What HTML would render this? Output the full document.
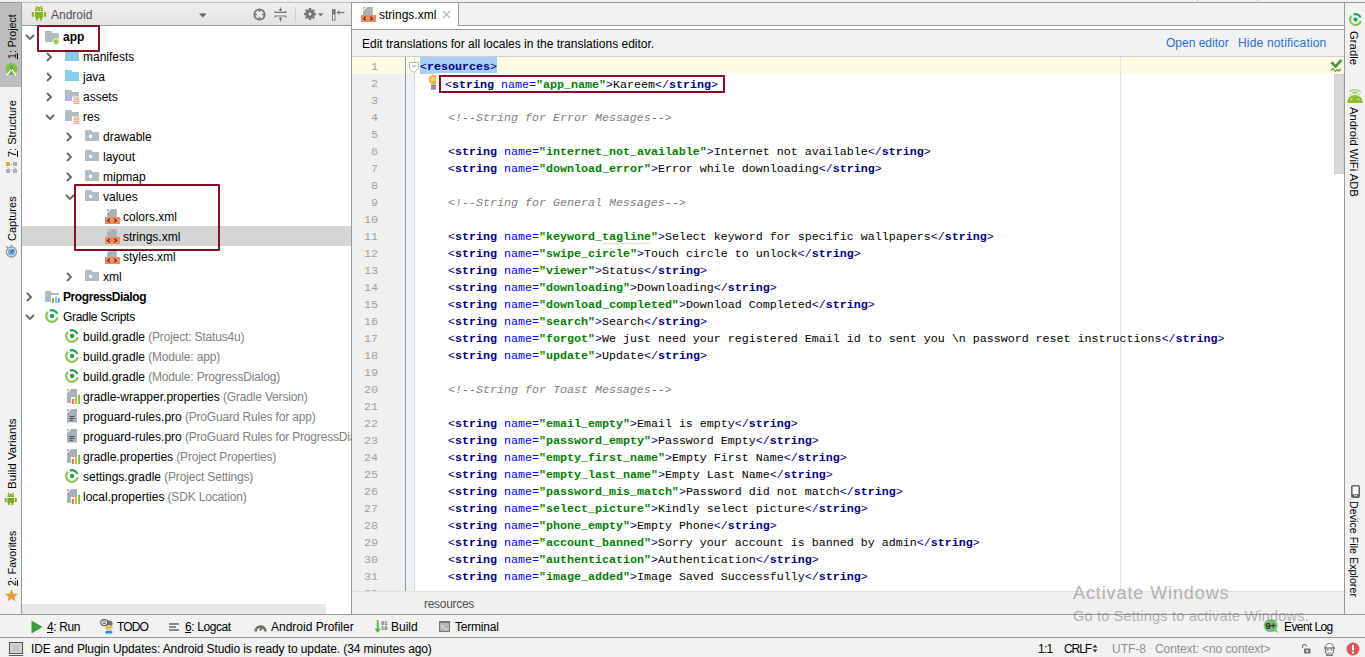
<!DOCTYPE html><html><head><meta charset="utf-8"><style>
*{margin:0;padding:0;box-sizing:border-box}
html,body{width:1365px;height:657px;overflow:hidden;background:#f2f2f2;font-family:"Liberation Sans",sans-serif;font-size:12px;color:#000}
.a{position:absolute}
.i{position:absolute;line-height:0}
.t{position:absolute;white-space:pre;line-height:14px}
.code{position:absolute;left:0;font-family:"Liberation Mono",monospace;font-size:11.67px;white-space:pre;line-height:17px;color:#000}
.tg{color:#000080}
.tb{color:#000080;font-weight:bold}
.at{color:#0000ff}
.vl{color:#008000;font-weight:bold}
.cm{color:#808080;font-style:italic}
.ln{position:absolute;font-family:"Liberation Mono",monospace;font-size:11.67px;line-height:17px;color:#a0a0a0;text-align:right;width:26px;left:0}
.vt{position:absolute;white-space:pre;line-height:14px;font-size:11px}
.gr{color:#808080;letter-spacing:-0.17px}
</style></head><body>
<div class="a" style="left:0;top:0;width:1365px;height:2px;background:#f0f0f0"></div>
<div class="a" style="left:0;top:2px;width:1365px;height:1px;background:#999"></div>
<div class="a" style="left:22px;top:2px;width:329px;height:1px;background:#bdbdbd"></div>
<div class="a" style="left:1197px;top:0;width:1px;height:1px;background:#b0b0b0"></div>
<div class="a" style="left:1257px;top:0;width:1px;height:1px;background:#b0b0b0"></div>
<div class="a" style="left:21px;top:3px;width:1px;height:611px;background:#999"></div>
<div class="a" style="left:0;top:3px;width:21px;height:84px;background:#bdbdbd"></div>
<div class="vt" style="left:5px;top:59.4px;transform-origin:0 0;transform:rotate(-90deg) scaleX(0.96)"><u>1</u>: Project</div>
<div class="vt" style="left:5px;top:156.6px;transform-origin:0 0;transform:rotate(-90deg) scaleX(1.0)"><u>7</u>: Structure</div>
<div class="vt" style="left:5px;top:241.2px;transform-origin:0 0;transform:rotate(-90deg) scaleX(1.0)">Captures</div>
<div class="vt" style="left:5px;top:489px;transform-origin:0 0;transform:rotate(-90deg) scaleX(1.05)">Build Variants</div>
<div class="vt" style="left:5px;top:585.8px;transform-origin:0 0;transform:rotate(-90deg) scaleX(0.96)"><u>2</u>: Favorites</div>
<div class="i" style="left:5px;top:63px"><svg width="13" height="13" viewBox="0 0 13 13"><circle cx="6.5" cy="6" r="6" fill="#7cc243"/><path d="M3.5 10.2a3.2 1.6 0 0 0 6 0" fill="#5ea832"/><path d="M6.5 2.2l1.3 2.3-1.3 2.6-1.3-2.6z" fill="#5b6b5b"/><circle cx="6.5" cy="4.6" r="0.6" fill="#b0d090"/><path d="M1.8 12.3L6 6.6M11.2 12.3L7 6.6" stroke="#fff" stroke-width="1.4" fill="none"/></svg></div>
<div class="i" style="left:6px;top:162px"><svg width="12" height="12" viewBox="0 0 12 12"><rect x="0" y="0" width="4" height="4" fill="#e8a33d"/><rect x="7" y="0" width="4" height="4" fill="#a6b0b8"/><rect x="0" y="7" width="4" height="4" fill="#a6b0b8"/><rect x="7" y="7" width="4" height="4" fill="#a6b0b8"/><path d="M4.5 3.5L6.5 1.5M1 5l2 1.5M8 5.5l2 1M4.5 9.5l2-2" stroke="#a6b0b8" stroke-width="0.9"/></svg></div>
<div class="i" style="left:5px;top:244px"><svg width="13" height="14" viewBox="0 0 13 14"><circle cx="6.5" cy="8" r="5" fill="#fff" stroke="#9a9a9a" stroke-width="1.4"/><circle cx="6.5" cy="8" r="3.6" fill="#5fb0e8"/><path d="M6.5 0.8v2.4M1.3 2.3l1.7 1.7" stroke="#9a9a9a" stroke-width="1.4"/><path d="M6 8.6l2.6-3" stroke="#505050" stroke-width="1.1"/></svg></div>
<div class="i" style="left:4.2px;top:492.2px"><svg width="13.5" height="14.4" viewBox="0 0 16 17"><g fill="#7ea81c"><path d="M4 5.9V5.2a4 3.2 0 0 1 8 0V5.9z"/><circle cx="5.4" cy="1.5" r="0.8"/><circle cx="10.6" cy="1.5" r="0.8"/><path d="M5.4 1.5l1 1.5M10.6 1.5l-1 1.5" stroke="#7ea81c" stroke-width="0.9"/><path d="M4 7h8v5.4a0.6 0.6 0 0 1-0.6 0.6H4.6A0.6 0.6 0 0 1 4 12.4z"/><rect x="0.8" y="7" width="2.3" height="5.1" rx="1.1"/><rect x="12.9" y="7" width="2.3" height="5.1" rx="1.1"/><rect x="5" y="12" width="2.2" height="3.7" rx="1.1"/><rect x="8.8" y="12" width="2.2" height="3.7" rx="1.1"/></g><circle cx="6.5" cy="4.5" r="0.65" fill="#fff"/><circle cx="9.5" cy="4.5" r="0.65" fill="#fff"/></svg></div>
<div class="i" style="left:5px;top:589px"><svg width="13" height="13" viewBox="0 0 13 13"><path d="M6.5 0.3l1.9 4.1 4.4 0.5-3.3 3 0.9 4.4-3.9-2.2-3.9 2.2 0.9-4.4-3.3-3 4.4-0.5z" fill="#e3a136"/></svg></div>
<div class="a" style="left:22px;top:3px;width:329px;height:22px;background:linear-gradient(#f0f0f0,#e2e2e2)"></div>
<div class="a" style="left:22px;top:25px;width:329px;height:1px;background:#9c9c9c"></div>
<div class="a" style="left:22px;top:26px;width:329px;height:588px;background:#fff"></div>
<div class="a" style="left:351px;top:3px;width:1px;height:611px;background:#999"></div>
<div class="t" style="left:51px;top:8px;color:#505050">Android</div>
<div class="i" style="left:31px;top:5px"><svg width="16" height="17" viewBox="0 0 16 17"><g fill="#8cb526"><path d="M4 5.9V5.2a4 3.2 0 0 1 8 0V5.9z"/><circle cx="5.4" cy="1.5" r="0.8"/><circle cx="10.6" cy="1.5" r="0.8"/><path d="M5.4 1.5l1 1.5M10.6 1.5l-1 1.5" stroke="#8cb526" stroke-width="0.9"/><path d="M4 7h8v5.4a0.6 0.6 0 0 1-0.6 0.6H4.6A0.6 0.6 0 0 1 4 12.4z"/><rect x="0.8" y="7" width="2.3" height="5.1" rx="1.1"/><rect x="12.9" y="7" width="2.3" height="5.1" rx="1.1"/><rect x="5" y="12" width="2.2" height="3.7" rx="1.1"/><rect x="8.8" y="12" width="2.2" height="3.7" rx="1.1"/></g><circle cx="6.5" cy="4.5" r="0.65" fill="#fff"/><circle cx="9.5" cy="4.5" r="0.65" fill="#fff"/></svg></div>
<div class="i" style="left:199px;top:13px"><svg width="8" height="5" viewBox="0 0 8 5"><path d="M0 0.5h7.5L3.75 4.5z" fill="#5e5e5e"/></svg></div>
<div class="i" style="left:253px;top:8px"><svg width="13" height="13" viewBox="0 0 13 13"><circle cx="6.5" cy="6.5" r="5.2" stroke="#777" stroke-width="1.8" fill="none"/><path d="M6.5 1.5v2.4M6.5 9.1v2.4M1.5 6.5h2.4M9.1 6.5h2.4" stroke="#777" stroke-width="1.6"/></svg></div>
<div class="i" style="left:274px;top:7px"><svg width="13" height="15" viewBox="0 0 13 15"><path d="M1.2 3.8v1.6h10.6v-1.6M1.2 10.6v-1.6h10.6v1.6" stroke="#777" stroke-width="1.2" fill="none"/><path d="M6.5 0.5v3.5M6.5 10.5v4" stroke="#777" stroke-width="1.1"/><path d="M4.3 2.3L6.5 4.5 8.7 2.3zM4.3 12.3L6.5 10.1 8.7 12.3z" fill="#777"/></svg></div>
<div class="a" style="left:295px;top:7px;width:1px;height:15px;background:#cfcfcf"></div>
<div class="i" style="left:303px;top:7px"><svg width="14" height="14" viewBox="0 0 14 14"><g fill="#777"><circle cx="7" cy="7" r="4.6"/><rect x="5.8" y="1" width="2.4" height="12"/><rect x="1" y="5.8" width="12" height="2.4"/><rect x="5.8" y="1" width="2.4" height="12" transform="rotate(45 7 7)"/><rect x="5.8" y="1" width="2.4" height="12" transform="rotate(-45 7 7)"/></g><circle cx="7" cy="7" r="1.5" fill="#eee"/></svg></div>
<div class="i" style="left:318px;top:13px"><svg width="6" height="4" viewBox="0 0 6 4"><path d="M0 0.3h5.2L2.6 3.4z" fill="#777"/></svg></div>
<div class="i" style="left:331px;top:8px"><svg width="15" height="13" viewBox="0 0 15 13"><rect x="1.5" y="1.5" width="2.4" height="10.5" stroke="#777" stroke-width="1" fill="#fff"/><rect x="1" y="1" width="3.4" height="5.5" fill="#777"/><path d="M7 4.5h6.5" stroke="#777" stroke-width="1.2"/><path d="M5.6 4.5L8.3 2v5z" fill="#777"/></svg></div>
<div class="a" style="left:22px;top:604px;width:304px;height:10px;background:#e6e6e6"></div>
<div class="a" style="left:22px;top:226px;width:329px;height:20px;background:#d5d5d5"></div>
<div class="i" style="left:25px;top:34px"><svg width="10" height="7" viewBox="0 0 10 7"><path d="M1 1L5 5L9 1" stroke="#666" stroke-width="1.8" fill="none"/></svg></div>
<div class="i" style="left:44px;top:30px"><svg width="16" height="16" viewBox="0 0 16 16"><path d="M1 1h6l1.5 2H15v9H1z" fill="#b4bcc3"/><circle cx="12.2" cy="11.7" r="3" fill="#9bc53d" stroke="#fff" stroke-width="0.9"/></svg></div>
<div class="t" style="left:63px;top:30px;font-weight:bold;">app</div>
<div class="i" style="left:46px;top:52px"><svg width="7" height="10" viewBox="0 0 7 10"><path d="M1 1L5 5L1 9" stroke="#666" stroke-width="1.8" fill="none"/></svg></div>
<div class="i" style="left:64px;top:49px"><svg width="16" height="16" viewBox="0 0 16 16"><path d="M1 1h6l1.5 2H15v9H1z" fill="#87cfe8"/></svg></div>
<div class="t" style="left:83px;top:50px;">manifests</div>
<div class="i" style="left:46px;top:72px"><svg width="7" height="10" viewBox="0 0 7 10"><path d="M1 1L5 5L1 9" stroke="#666" stroke-width="1.8" fill="none"/></svg></div>
<div class="i" style="left:64px;top:69px"><svg width="16" height="16" viewBox="0 0 16 16"><path d="M1 1h6l1.5 2H15v9H1z" fill="#87cfe8"/></svg></div>
<div class="t" style="left:83px;top:70px;">java</div>
<div class="i" style="left:46px;top:92px"><svg width="7" height="10" viewBox="0 0 7 10"><path d="M1 1L5 5L1 9" stroke="#666" stroke-width="1.8" fill="none"/></svg></div>
<div class="i" style="left:64px;top:89px"><svg width="16" height="16" viewBox="0 0 16 16"><path d="M1 1h6l1.5 2H15v9H1z" fill="#b4bcc3"/><rect x="8" y="7.5" width="8" height="8.5" fill="#fff"/><path d="M9.5 9h6M9.5 10.8h6M9.5 12.6h6M9.5 14.4h6" stroke="#e3a13a" stroke-width="1"/></svg></div>
<div class="t" style="left:83px;top:90px;">assets</div>
<div class="i" style="left:45px;top:114px"><svg width="10" height="7" viewBox="0 0 10 7"><path d="M1 1L5 5L9 1" stroke="#666" stroke-width="1.8" fill="none"/></svg></div>
<div class="i" style="left:64px;top:109px"><svg width="16" height="16" viewBox="0 0 16 16"><path d="M1 1h6l1.5 2H15v9H1z" fill="#b4bcc3"/><rect x="8" y="7.5" width="8" height="8.5" fill="#fff"/><path d="M9.5 9h6M9.5 10.8h6M9.5 12.6h6M9.5 14.4h6" stroke="#e3a13a" stroke-width="1"/></svg></div>
<div class="t" style="left:83px;top:110px;">res</div>
<div class="i" style="left:66px;top:132px"><svg width="7" height="10" viewBox="0 0 7 10"><path d="M1 1L5 5L1 9" stroke="#666" stroke-width="1.8" fill="none"/></svg></div>
<div class="i" style="left:84px;top:129px"><svg width="16" height="16" viewBox="0 0 16 16"><path d="M1 1h6l1.5 2H15v9H1z" fill="#b4bcc3"/><circle cx="6.5" cy="7.5" r="1.7" fill="#fff"/></svg></div>
<div class="t" style="left:103px;top:130px;">drawable</div>
<div class="i" style="left:66px;top:152px"><svg width="7" height="10" viewBox="0 0 7 10"><path d="M1 1L5 5L1 9" stroke="#666" stroke-width="1.8" fill="none"/></svg></div>
<div class="i" style="left:84px;top:149px"><svg width="16" height="16" viewBox="0 0 16 16"><path d="M1 1h6l1.5 2H15v9H1z" fill="#b4bcc3"/><circle cx="6.5" cy="7.5" r="1.7" fill="#fff"/></svg></div>
<div class="t" style="left:103px;top:150px;">layout</div>
<div class="i" style="left:66px;top:172px"><svg width="7" height="10" viewBox="0 0 7 10"><path d="M1 1L5 5L1 9" stroke="#666" stroke-width="1.8" fill="none"/></svg></div>
<div class="i" style="left:84px;top:169px"><svg width="16" height="16" viewBox="0 0 16 16"><path d="M1 1h6l1.5 2H15v9H1z" fill="#b4bcc3"/><circle cx="6.5" cy="7.5" r="1.7" fill="#fff"/></svg></div>
<div class="t" style="left:103px;top:170px;">mipmap</div>
<div class="i" style="left:65px;top:194px"><svg width="10" height="7" viewBox="0 0 10 7"><path d="M1 1L5 5L9 1" stroke="#666" stroke-width="1.8" fill="none"/></svg></div>
<div class="i" style="left:84px;top:189px"><svg width="16" height="16" viewBox="0 0 16 16"><path d="M1 1h6l1.5 2H15v9H1z" fill="#b4bcc3"/><circle cx="6.5" cy="7.5" r="1.7" fill="#fff"/></svg></div>
<div class="t" style="left:103px;top:190px;">values</div>
<div class="i" style="left:104px;top:209px"><svg width="16" height="16" viewBox="0 0 16 16"><path d="M7.2 0H12.8V8H3V4.2z" fill="#a9b2ba"/><path d="M3 0H5.8L3 2.8z" fill="#a9b2ba"/><rect x="1" y="8" width="15" height="7" fill="#ef8c5c"/><path d="M5.8 9.6l-2.3 1.9 2.3 1.9M10.2 9.6l2.3 1.9-2.3 1.9" stroke="#4a2a1a" stroke-width="1.1" fill="none"/></svg></div>
<div class="t" style="left:123px;top:210px;">colors.xml</div>
<div class="i" style="left:104px;top:229px"><svg width="16" height="16" viewBox="0 0 16 16"><path d="M7.2 0H12.8V8H3V4.2z" fill="#a9b2ba"/><path d="M3 0H5.8L3 2.8z" fill="#a9b2ba"/><rect x="1" y="8" width="15" height="7" fill="#ef8c5c"/><path d="M5.8 9.6l-2.3 1.9 2.3 1.9M10.2 9.6l2.3 1.9-2.3 1.9" stroke="#4a2a1a" stroke-width="1.1" fill="none"/></svg></div>
<div class="t" style="left:123px;top:230px;">strings.xml</div>
<div class="i" style="left:104px;top:249px"><svg width="16" height="16" viewBox="0 0 16 16"><path d="M7.2 0H12.8V8H3V4.2z" fill="#a9b2ba"/><path d="M3 0H5.8L3 2.8z" fill="#a9b2ba"/><rect x="1" y="8" width="15" height="7" fill="#ef8c5c"/><path d="M5.8 9.6l-2.3 1.9 2.3 1.9M10.2 9.6l2.3 1.9-2.3 1.9" stroke="#4a2a1a" stroke-width="1.1" fill="none"/></svg></div>
<div class="t" style="left:123px;top:250px;">styles.xml</div>
<div class="i" style="left:66px;top:272px"><svg width="7" height="10" viewBox="0 0 7 10"><path d="M1 1L5 5L1 9" stroke="#666" stroke-width="1.8" fill="none"/></svg></div>
<div class="i" style="left:84px;top:269px"><svg width="16" height="16" viewBox="0 0 16 16"><path d="M1 1h6l1.5 2H15v9H1z" fill="#b4bcc3"/><circle cx="6.5" cy="7.5" r="1.7" fill="#fff"/></svg></div>
<div class="t" style="left:103px;top:270px;">xml</div>
<div class="i" style="left:26px;top:292px"><svg width="7" height="10" viewBox="0 0 7 10"><path d="M1 1L5 5L1 9" stroke="#666" stroke-width="1.8" fill="none"/></svg></div>
<div class="i" style="left:44px;top:289px"><svg width="16" height="16" viewBox="0 0 16 16"><path d="M1 2h5.5l1.5 2H15v9H1z" fill="#b4bcc3"/><rect x="7" y="6" width="9" height="10" fill="#fff"/><rect x="8" y="9" width="1.9" height="5" fill="#6cbf4c"/><rect x="11" y="7.5" width="1.9" height="6.5" fill="#a9b2ba"/><rect x="13.8" y="9" width="1.9" height="5" fill="#40a9e0"/></svg></div>
<div class="t" style="left:63px;top:290px;font-weight:bold;letter-spacing:-0.4px;">ProgressDialog</div>
<div class="i" style="left:25px;top:314px"><svg width="10" height="7" viewBox="0 0 10 7"><path d="M1 1L5 5L9 1" stroke="#666" stroke-width="1.8" fill="none"/></svg></div>
<div class="i" style="left:44px;top:309px"><svg width="16" height="16" viewBox="0 0 16 16"><path d="M13.67 8.21A5.8 5.8 0 1 1 3.9 2.9" stroke="#8dc152" stroke-width="2.2" fill="none"/><path d="M5.83 1.62A5.8 5.8 0 0 1 13.38 4.83" stroke="#22a35a" stroke-width="2.2" fill="none"/><circle cx="8" cy="7" r="2.3" fill="#22a35a"/></svg></div>
<div class="t" style="left:63px;top:310px;letter-spacing:-0.3px;">Gradle Scripts</div>
<div class="i" style="left:64px;top:329px"><svg width="16" height="16" viewBox="0 0 16 16"><path d="M13.67 8.21A5.8 5.8 0 1 1 3.9 2.9" stroke="#8dc152" stroke-width="2.2" fill="none"/><path d="M5.83 1.62A5.8 5.8 0 0 1 13.38 4.83" stroke="#22a35a" stroke-width="2.2" fill="none"/><circle cx="8" cy="7" r="2.3" fill="#22a35a"/></svg></div>
<div class="t" style="left:83px;top:330px;">build.gradle<span class="gr"> (Project: Status4u)</span></div>
<div class="i" style="left:64px;top:349px"><svg width="16" height="16" viewBox="0 0 16 16"><path d="M13.67 8.21A5.8 5.8 0 1 1 3.9 2.9" stroke="#8dc152" stroke-width="2.2" fill="none"/><path d="M5.83 1.62A5.8 5.8 0 0 1 13.38 4.83" stroke="#22a35a" stroke-width="2.2" fill="none"/><circle cx="8" cy="7" r="2.3" fill="#22a35a"/></svg></div>
<div class="t" style="left:83px;top:350px;">build.gradle<span class="gr"> (Module: app)</span></div>
<div class="i" style="left:64px;top:369px"><svg width="16" height="16" viewBox="0 0 16 16"><path d="M13.67 8.21A5.8 5.8 0 1 1 3.9 2.9" stroke="#8dc152" stroke-width="2.2" fill="none"/><path d="M5.83 1.62A5.8 5.8 0 0 1 13.38 4.83" stroke="#22a35a" stroke-width="2.2" fill="none"/><circle cx="8" cy="7" r="2.3" fill="#22a35a"/></svg></div>
<div class="t" style="left:83px;top:370px;">build.gradle<span class="gr"> (Module: ProgressDialog)</span></div>
<div class="i" style="left:64px;top:389px"><svg width="16" height="16" viewBox="0 0 16 16"><path d="M7.2 0H13V14H3V4.2z" fill="#a9b2ba"/><path d="M3 0H5.8L3 2.8z" fill="#a9b2ba"/><rect x="7" y="8" width="9.5" height="8" fill="#fff"/><rect x="7.9" y="10" width="1.9" height="5" fill="#f26a2a"/><rect x="11" y="7.8" width="1.9" height="7.2" fill="#f5a93a"/><rect x="14.2" y="5.8" width="1.9" height="9.2" fill="#6cbf4c"/></svg></div>
<div class="t" style="left:83px;top:390px;">gradle-wrapper.properties<span class="gr"> (Gradle Version)</span></div>
<div class="i" style="left:64px;top:409px"><svg width="16" height="16" viewBox="0 0 16 16"><path d="M7.2 0H13V13.5H3V4.2z" fill="#a9b2ba"/><path d="M3 0H5.8L3 2.8z" fill="#a9b2ba"/><path d="M5.5 7.5h5M5.5 9.4h5M5.5 11.3h3.5" stroke="#4a4a4a" stroke-width="1"/></svg></div>
<div class="t" style="left:83px;top:410px;">proguard-rules.pro<span class="gr"> (ProGuard Rules for app)</span></div>
<div class="i" style="left:64px;top:429px"><svg width="16" height="16" viewBox="0 0 16 16"><path d="M7.2 0H13V13.5H3V4.2z" fill="#a9b2ba"/><path d="M3 0H5.8L3 2.8z" fill="#a9b2ba"/><path d="M5.5 7.5h5M5.5 9.4h5M5.5 11.3h3.5" stroke="#4a4a4a" stroke-width="1"/></svg></div>
<div class="t" style="left:83px;top:430px;">proguard-rules.pro<span class="gr"> (ProGuard Rules for ProgressDialog)</span></div>
<div class="i" style="left:64px;top:449px"><svg width="16" height="16" viewBox="0 0 16 16"><path d="M7.2 0H13V14H3V4.2z" fill="#a9b2ba"/><path d="M3 0H5.8L3 2.8z" fill="#a9b2ba"/><rect x="7" y="8" width="9.5" height="8" fill="#fff"/><rect x="7.9" y="10" width="1.9" height="5" fill="#f26a2a"/><rect x="11" y="7.8" width="1.9" height="7.2" fill="#f5a93a"/><rect x="14.2" y="5.8" width="1.9" height="9.2" fill="#6cbf4c"/></svg></div>
<div class="t" style="left:83px;top:450px;">gradle.properties<span class="gr"> (Project Properties)</span></div>
<div class="i" style="left:64px;top:469px"><svg width="16" height="16" viewBox="0 0 16 16"><path d="M13.67 8.21A5.8 5.8 0 1 1 3.9 2.9" stroke="#8dc152" stroke-width="2.2" fill="none"/><path d="M5.83 1.62A5.8 5.8 0 0 1 13.38 4.83" stroke="#22a35a" stroke-width="2.2" fill="none"/><circle cx="8" cy="7" r="2.3" fill="#22a35a"/></svg></div>
<div class="t" style="left:83px;top:470px;">settings.gradle<span class="gr"> (Project Settings)</span></div>
<div class="i" style="left:64px;top:489px"><svg width="16" height="16" viewBox="0 0 16 16"><path d="M7.2 0H13V14H3V4.2z" fill="#a9b2ba"/><path d="M3 0H5.8L3 2.8z" fill="#a9b2ba"/><rect x="7" y="8" width="9.5" height="8" fill="#fff"/><rect x="7.9" y="10" width="1.9" height="5" fill="#f26a2a"/><rect x="11" y="7.8" width="1.9" height="7.2" fill="#f5a93a"/><rect x="14.2" y="5.8" width="1.9" height="9.2" fill="#6cbf4c"/></svg></div>
<div class="t" style="left:83px;top:490px;">local.properties<span class="gr"> (SDK Location)</span></div>
<div class="a" style="left:37px;top:25px;width:63px;height:27px;border:2px solid #8b0f22;border-radius:1px"></div>
<div class="a" style="left:74px;top:184px;width:146px;height:67px;border:2px solid #8b0f22;border-radius:1px"></div>
<div class="a" style="left:352px;top:3px;width:992px;height:22px;background:#f2f2f2"></div>
<div class="a" style="left:352px;top:25px;width:992px;height:1px;background:#999"></div>
<div class="a" style="left:352px;top:26px;width:992px;height:3px;background:#fff"></div>
<div class="a" style="left:352px;top:29px;width:992px;height:1px;background:#999"></div>
<div class="a" style="left:352px;top:3px;width:106px;height:26px;background:#fff"></div>
<div class="a" style="left:458px;top:3px;width:1px;height:23px;background:#999"></div>
<div class="i" style="left:360px;top:7px"><svg width="16" height="16" viewBox="0 0 16 16"><path d="M7.2 0H12.8V8H3V4.2z" fill="#a9b2ba"/><path d="M3 0H5.8L3 2.8z" fill="#a9b2ba"/><rect x="1" y="8" width="15" height="7" fill="#ef8c5c"/><path d="M5.8 9.6l-2.3 1.9 2.3 1.9M10.2 9.6l2.3 1.9-2.3 1.9" stroke="#4a2a1a" stroke-width="1.1" fill="none"/></svg></div>
<div class="t" style="left:379px;top:8px">strings.xml</div>
<div class="i" style="left:442px;top:10px"><svg width="9" height="9" viewBox="0 0 9 9"><path d="M1 1L8 8M8 1L1 8" stroke="#b0b5ba" stroke-width="1.1"/></svg></div>
<div class="a" style="left:352px;top:30px;width:992px;height:26px;background:#f2f2f2"></div>
<div class="a" style="left:352px;top:56px;width:992px;height:1px;background:#cfcfcf"></div>
<div class="t" style="left:362px;top:37px">Edit translations for all locales in the translations editor.</div>
<div class="t" style="left:1166px;top:36px;color:#2a6fd0">Open editor</div>
<div class="t" style="left:1238px;top:36px;color:#2a6fd0;letter-spacing:0.18px">Hide notification</div>
<div class="a" style="left:352px;top:57px;width:992px;height:534px;background:#fff"></div>
<div class="a" style="left:352px;top:57px;width:63px;height:534px;background:#f0f0f0"></div>
<div class="a" style="left:352px;top:57px;width:992px;height:17px;background:#fffae2"></div>
<div class="a" style="left:420px;top:57px;width:77px;height:17px;background:#a6d0fa"></div>
<div class="a" style="left:405px;top:57px;width:1px;height:534px;background:#7f9cc0"></div>
<div class="a" style="left:414px;top:57px;width:1px;height:534px;background:#d8d8d8"></div>
<div class="a" style="left:1120px;top:57px;width:1px;height:534px;background:#e4e4e4"></div>
<div class="i" style="left:409px;top:62px"><svg width="11" height="11" viewBox="0 0 11 11"><path d="M0.5 0.5h9v6l-4.5 4-4.5-4z" fill="#fff" stroke="#b8b8b8" stroke-width="1"/><path d="M2.8 4h4.4" stroke="#999" stroke-width="1"/></svg></div>
<div class="a" style="left:1334px;top:74px;width:10px;height:100px;background:#dadada;border:1px solid #d0d0d0"></div>
<div class="i" style="left:1330px;top:58px"><svg width="14" height="14" viewBox="0 0 14 14"><path d="M1.4 4.3L5.6 8.5L11.4 2" stroke="#489c3d" stroke-width="2.7" fill="none"/><path d="M1.3 12.6C2.5 10 3.3 10 4.5 12.4S6.6 10 7.8 12.4S9.9 10 11.3 11.4" stroke="#489c3d" stroke-width="1.2" fill="none"/></svg></div>
<div class="a" style="left:352px;top:57px;width:982px;height:534px;overflow:hidden">
<div class="ln" style="top:2px">1</div>
<div class="code" style="left:68px;top:2px"><span class="tg">&lt;</span><span class="tb">resources</span><span class="tg">&gt;</span></div>
<div class="ln" style="top:19px">2</div>
<div class="code" style="left:93px;top:19px"><span class="tg">&lt;</span><span class="tb">string</span> <span class="at">name=</span><span class="vl">"app_name"</span><span class="tg">&gt;</span>Kareem<span class="tg">&lt;/</span><span class="tb">string</span><span class="tg">&gt;</span></div>
<div class="ln" style="top:36px">3</div>
<div class="ln" style="top:53px">4</div>
<div class="code cm" style="left:96px;top:53px">&lt;!--String for Error Messages--&gt;</div>
<div class="ln" style="top:70px">5</div>
<div class="ln" style="top:87px">6</div>
<div class="code" style="left:96px;top:87px"><span class="tg">&lt;</span><span class="tb">string</span> <span class="at">name=</span><span class="vl">"internet_not_available"</span><span class="tg">&gt;</span>Internet not available<span class="tg">&lt;/</span><span class="tb">string</span><span class="tg">&gt;</span></div>
<div class="ln" style="top:104px">7</div>
<div class="code" style="left:96px;top:104px"><span class="tg">&lt;</span><span class="tb">string</span> <span class="at">name=</span><span class="vl">"download_error"</span><span class="tg">&gt;</span>Error while downloading<span class="tg">&lt;/</span><span class="tb">string</span><span class="tg">&gt;</span></div>
<div class="ln" style="top:121px">8</div>
<div class="ln" style="top:138px">9</div>
<div class="code cm" style="left:96px;top:138px">&lt;!--String for General Messages--&gt;</div>
<div class="ln" style="top:155px">10</div>
<div class="ln" style="top:172px">11</div>
<div class="code" style="left:96px;top:172px"><span class="tg">&lt;</span><span class="tb">string</span> <span class="at">name=</span><span class="vl">"keyword_tagline"</span><span class="tg">&gt;</span>Select keyword for specific wallpapers<span class="tg">&lt;/</span><span class="tb">string</span><span class="tg">&gt;</span></div>
<div class="ln" style="top:189px">12</div>
<div class="code" style="left:96px;top:189px"><span class="tg">&lt;</span><span class="tb">string</span> <span class="at">name=</span><span class="vl">"swipe_circle"</span><span class="tg">&gt;</span>Touch circle to unlock<span class="tg">&lt;/</span><span class="tb">string</span><span class="tg">&gt;</span></div>
<div class="ln" style="top:206px">13</div>
<div class="code" style="left:96px;top:206px"><span class="tg">&lt;</span><span class="tb">string</span> <span class="at">name=</span><span class="vl">"viewer"</span><span class="tg">&gt;</span>Status<span class="tg">&lt;/</span><span class="tb">string</span><span class="tg">&gt;</span></div>
<div class="ln" style="top:223px">14</div>
<div class="code" style="left:96px;top:223px"><span class="tg">&lt;</span><span class="tb">string</span> <span class="at">name=</span><span class="vl">"downloading"</span><span class="tg">&gt;</span>Downloading<span class="tg">&lt;/</span><span class="tb">string</span><span class="tg">&gt;</span></div>
<div class="ln" style="top:240px">15</div>
<div class="code" style="left:96px;top:240px"><span class="tg">&lt;</span><span class="tb">string</span> <span class="at">name=</span><span class="vl">"download_completed"</span><span class="tg">&gt;</span>Download Completed<span class="tg">&lt;/</span><span class="tb">string</span><span class="tg">&gt;</span></div>
<div class="ln" style="top:257px">16</div>
<div class="code" style="left:96px;top:257px"><span class="tg">&lt;</span><span class="tb">string</span> <span class="at">name=</span><span class="vl">"search"</span><span class="tg">&gt;</span>Search<span class="tg">&lt;/</span><span class="tb">string</span><span class="tg">&gt;</span></div>
<div class="ln" style="top:274px">17</div>
<div class="code" style="left:96px;top:274px"><span class="tg">&lt;</span><span class="tb">string</span> <span class="at">name=</span><span class="vl">"forgot"</span><span class="tg">&gt;</span>We just need your registered Email id to sent you \n password reset instructions<span class="tg">&lt;/</span><span class="tb">string</span><span class="tg">&gt;</span></div>
<div class="ln" style="top:291px">18</div>
<div class="code" style="left:96px;top:291px"><span class="tg">&lt;</span><span class="tb">string</span> <span class="at">name=</span><span class="vl">"update"</span><span class="tg">&gt;</span>Update<span class="tg">&lt;/</span><span class="tb">string</span><span class="tg">&gt;</span></div>
<div class="ln" style="top:308px">19</div>
<div class="ln" style="top:325px">20</div>
<div class="code cm" style="left:96px;top:325px">&lt;!--String for Toast Messages--&gt;</div>
<div class="ln" style="top:342px">21</div>
<div class="ln" style="top:359px">22</div>
<div class="code" style="left:96px;top:359px"><span class="tg">&lt;</span><span class="tb">string</span> <span class="at">name=</span><span class="vl">"email_empty"</span><span class="tg">&gt;</span>Email is empty<span class="tg">&lt;/</span><span class="tb">string</span><span class="tg">&gt;</span></div>
<div class="ln" style="top:376px">23</div>
<div class="code" style="left:96px;top:376px"><span class="tg">&lt;</span><span class="tb">string</span> <span class="at">name=</span><span class="vl">"password_empty"</span><span class="tg">&gt;</span>Password Empty<span class="tg">&lt;/</span><span class="tb">string</span><span class="tg">&gt;</span></div>
<div class="ln" style="top:393px">24</div>
<div class="code" style="left:96px;top:393px"><span class="tg">&lt;</span><span class="tb">string</span> <span class="at">name=</span><span class="vl">"empty_first_name"</span><span class="tg">&gt;</span>Empty First Name<span class="tg">&lt;/</span><span class="tb">string</span><span class="tg">&gt;</span></div>
<div class="ln" style="top:410px">25</div>
<div class="code" style="left:96px;top:410px"><span class="tg">&lt;</span><span class="tb">string</span> <span class="at">name=</span><span class="vl">"empty_last_name"</span><span class="tg">&gt;</span>Empty Last Name<span class="tg">&lt;/</span><span class="tb">string</span><span class="tg">&gt;</span></div>
<div class="ln" style="top:427px">26</div>
<div class="code" style="left:96px;top:427px"><span class="tg">&lt;</span><span class="tb">string</span> <span class="at">name=</span><span class="vl">"password_mis_match"</span><span class="tg">&gt;</span>Password did not match<span class="tg">&lt;/</span><span class="tb">string</span><span class="tg">&gt;</span></div>
<div class="ln" style="top:444px">27</div>
<div class="code" style="left:96px;top:444px"><span class="tg">&lt;</span><span class="tb">string</span> <span class="at">name=</span><span class="vl">"select_picture"</span><span class="tg">&gt;</span>Kindly select picture<span class="tg">&lt;/</span><span class="tb">string</span><span class="tg">&gt;</span></div>
<div class="ln" style="top:461px">28</div>
<div class="code" style="left:96px;top:461px"><span class="tg">&lt;</span><span class="tb">string</span> <span class="at">name=</span><span class="vl">"phone_empty"</span><span class="tg">&gt;</span>Empty Phone<span class="tg">&lt;/</span><span class="tb">string</span><span class="tg">&gt;</span></div>
<div class="ln" style="top:478px">29</div>
<div class="code" style="left:96px;top:478px"><span class="tg">&lt;</span><span class="tb">string</span> <span class="at">name=</span><span class="vl">"account_banned"</span><span class="tg">&gt;</span>Sorry your account is banned by admin<span class="tg">&lt;/</span><span class="tb">string</span><span class="tg">&gt;</span></div>
<div class="ln" style="top:495px">30</div>
<div class="code" style="left:96px;top:495px"><span class="tg">&lt;</span><span class="tb">string</span> <span class="at">name=</span><span class="vl">"authentication"</span><span class="tg">&gt;</span>Authentication<span class="tg">&lt;/</span><span class="tb">string</span><span class="tg">&gt;</span></div>
<div class="ln" style="top:512px">31</div>
<div class="code" style="left:96px;top:512px"><span class="tg">&lt;</span><span class="tb">string</span> <span class="at">name=</span><span class="vl">"image_added"</span><span class="tg">&gt;</span>Image Saved Successfully<span class="tg">&lt;/</span><span class="tb">string</span><span class="tg">&gt;</span></div>
<div class="ln" style="top:529px">32</div>
</div>
<div class="i" style="left:603px;top:241px"><svg width="48" height="3" viewBox="0 0 48 3"><path d="M0 2.5l1.5-2 1.5 2 1.5-2 1.5 2 1.5-2 1.5 2 1.5-2 1.5 2 1.5-2 1.5 2 1.5-2 1.5 2 1.5-2 1.5 2 1.5-2 1.5 2 1.5-2 1.5 2 1.5-2 1.5 2 1.5-2 1.5 2 1.5-2 1.5 2 1.5-2 1.5 2 1.5-2 1.5 2 1.5-2 1.5 2 1.5-2 1.5 2 1.5-2 1.5 2 1.5-2 1.5 2" stroke="#c8d8b0" stroke-width="0.8" fill="none"/></svg></div>
<div class="a" style="left:436px;top:73px;width:300px;height:22px;background:#fff"></div>
<div class="i" style="left:428px;top:74px;width:8px;overflow:hidden"><svg width="11" height="16" viewBox="0 0 11 16"><circle cx="5.5" cy="5.6" r="4.8" fill="#f4b03e"/><circle cx="5" cy="5" r="2.5" fill="#f8c766"/><path d="M3.5 5l1.5 1.2 1.5-1.2" stroke="#fff3c0" stroke-width="0.8" fill="none"/><rect x="3" y="10.5" width="5" height="5.2" fill="#cfcfcf"/><path d="M3 11.3h5M3 13.1h5M3 14.9h5" stroke="#6a6a6a" stroke-width="1"/></svg></div>
<div class="a" style="left:439px;top:75px;width:286px;height:18px;border:2px solid #8b0f22"></div>
<div class="code" style="left:445px;top:77px"><span class="tg">&lt;</span><span class="tb">string</span> <span class="at">name=</span><span class="vl">"app_name"</span><span class="tg">&gt;</span>Kareem<span class="tg">&lt;/</span><span class="tb">string</span><span class="tg">&gt;</span></div>
<div class="a" style="left:352px;top:592px;width:992px;height:22px;background:#f0f0f0"></div>
<div class="a" style="left:352px;top:591px;width:992px;height:1px;background:#e0e0e0"></div>
<div class="t" style="left:424px;top:597px;color:#505050;letter-spacing:-0.3px">resources</div>
<div class="a" style="left:1344px;top:3px;width:1px;height:611px;background:#999"></div>
<div class="a" style="left:1345px;top:3px;width:20px;height:611px;background:#f2f2f2"></div>
<div class="vt" style="left:1361px;top:30.9px;transform-origin:0 0;transform:rotate(90deg) scaleX(1.03)">Gradle</div>
<div class="vt" style="left:1361px;top:106.9px;transform-origin:0 0;transform:rotate(90deg) scaleX(1.02)">Android WiFi ADB</div>
<div class="vt" style="left:1361px;top:501.3px;transform-origin:0 0;transform:rotate(90deg) scaleX(0.975)">Device File Explorer</div>
<div class="i" style="left:1348px;top:13px"><svg width="15" height="15" viewBox="0 0 16 16"><path d="M13.67 8.21A5.8 5.8 0 1 1 3.9 2.9" stroke="#8dc152" stroke-width="2.3" fill="none"/><path d="M5.83 1.62A5.8 5.8 0 0 1 13.38 4.83" stroke="#22a35a" stroke-width="2.3" fill="none"/><circle cx="8" cy="7" r="2.3" fill="#22a35a"/></svg></div>
<div class="i" style="left:1347px;top:87px"><svg width="16" height="16" viewBox="0 0 16 16"><path d="M2.3 4.8A7.5 6 0 0 1 13.7 4.8" stroke="#9cc45a" stroke-width="1.1" fill="none"/><path d="M5 6.3A4 3.4 0 0 1 11 6.3" stroke="#9cc45a" stroke-width="1.1" fill="none"/><circle cx="8" cy="6.2" r="1" fill="#9cc45a"/><circle cx="3.6" cy="7.6" r="0.7" fill="#8fbd2e"/><circle cx="12.4" cy="7.6" r="0.7" fill="#8fbd2e"/><path d="M0.2 16A7.8 8 0 0 1 15.8 16z" fill="#8fbd2e"/><circle cx="4.6" cy="12.2" r="0.8" fill="#fff"/><circle cx="11.4" cy="12.2" r="0.8" fill="#fff"/></svg></div>
<div class="i" style="left:1351px;top:485px"><svg width="9" height="13" viewBox="0 0 9 13"><rect x="0.8" y="0.8" width="7.4" height="11.4" rx="1.2" stroke="#666" stroke-width="1.6" fill="#fff"/><rect x="0.8" y="9.2" width="7.4" height="3" fill="#666"/><path d="M3 10.7h3" stroke="#fff" stroke-width="0.9"/></svg></div>
<div class="a" style="left:0;top:614px;width:1365px;height:1px;background:#999"></div>
<div class="a" style="left:326px;top:604px;width:25px;height:10px;background:#fff"></div>
<div class="a" style="left:0;top:637px;width:1365px;height:1px;background:#9a9a9a"></div>
<div class="t" style="left:47px;top:620px;letter-spacing:-0.4px"><u>4</u>: Run</div>
<div class="t" style="left:117px;top:620px;letter-spacing:-0.9px">TODO</div>
<div class="t" style="left:185px;top:620px;letter-spacing:-0.4px"><u>6</u>: Logcat</div>
<div class="t" style="left:271px;top:620px">Android Profiler</div>
<div class="t" style="left:391px;top:620px">Build</div>
<div class="t" style="left:455px;top:620px;letter-spacing:-0.2px">Terminal</div>
<div class="t" style="left:1284px;top:620px;letter-spacing:-0.6px">Event Log</div>
<div class="i" style="left:31px;top:620px"><svg width="12" height="14" viewBox="0 0 12 14"><path d="M0.5 0.5L11.5 7 0.5 13.5z" fill="#3a9d3a"/></svg></div>
<div class="i" style="left:100px;top:619px"><svg width="15" height="15" viewBox="0 0 15 15"><path d="M5.3 7.2a3.7 3.3 0 0 1 2.4-5.6h1.6a3.7 3.3 0 0 1 2.4 5.6z" fill="#757575"/><rect x="5.8" y="6" width="6" height="5.6" rx="2.2" fill="#f5c07a"/><rect x="4.9" y="7.6" width="1.2" height="2" fill="#f5c07a"/><rect x="11.5" y="7.6" width="1.2" height="2" fill="#f5c07a"/><circle cx="7.6" cy="8.3" r="0.5" fill="#555"/><circle cx="10" cy="8.3" r="0.5" fill="#555"/><path d="M5.3 14.5v-1.4c0-0.8 0.8-1.4 1.6-1.4h3.8c0.8 0 1.6 0.6 1.6 1.4v1.4z" fill="#2e8bd0"/><ellipse cx="4.2" cy="3.6" rx="3.5" ry="3" fill="#fff" stroke="#555" stroke-width="1.1"/><path d="M2.6 2.9h3.2M2.6 4.4h3.2" stroke="#555" stroke-width="0.9"/></svg></div>
<div class="i" style="left:169px;top:623px"><svg width="11" height="8" viewBox="0 0 11 8"><path d="M0 1h10M0 4h7M0 7h10" stroke="#666" stroke-width="1.4"/></svg></div>
<div class="i" style="left:254px;top:622px"><svg width="13" height="10" viewBox="0 0 13 10"><path d="M1.6 9.5A4.9 4.9 0 0 1 11.4 9.5" stroke="#6e6e6e" stroke-width="2.6" fill="none"/><path d="M6 8.6L9.2 3.8" stroke="#6e6e6e" stroke-width="1.9"/></svg></div>
<div class="i" style="left:374px;top:619px"><svg width="14" height="15" viewBox="0 0 14 15"><path d="M3.7 1v10" stroke="#5cb544" stroke-width="1.9"/><path d="M0.4 9.5l3.3 4.5 3.3-4.5z" fill="#5cb544"/><text x="7" y="5.6" font-size="5.6" font-family="Liberation Mono" font-weight="bold" fill="#666">01</text><text x="7" y="10.6" font-size="5.6" font-family="Liberation Mono" font-weight="bold" fill="#666">10</text></svg></div>
<div class="i" style="left:439px;top:621px"><svg width="11" height="11" viewBox="0 0 11 11"><rect x="0.6" y="0.6" width="9.8" height="9.8" fill="#a9a9a9" stroke="#777" stroke-width="1.2"/><rect x="0" y="0" width="11" height="2" fill="#777"/><rect x="1.8" y="3" width="7.4" height="6.2" fill="#b4b4b4" stroke="#d0d0d0" stroke-width="0.6"/><path d="M2.8 4.3l2 1.3-2 1.3M5.5 7.8h2.5" stroke="#fff" stroke-width="0.9" fill="none"/></svg></div>
<div class="i" style="left:1263px;top:619px"><svg width="17" height="15" viewBox="0 0 17 15"><ellipse cx="7.6" cy="6.6" rx="7" ry="6.4" fill="#72c172"/><path d="M9.5 11.5L15.5 14 12.5 9.5z" fill="#72c172"/><text x="2.6" y="10.2" font-size="9.6" font-family="Liberation Sans" font-weight="bold" fill="#2a2a2a" letter-spacing="-0.5">9+</text></svg></div>
<div class="i" style="left:9px;top:642px"><svg width="14" height="15" viewBox="0 0 14 15"><rect x="0.65" y="0.65" width="12.7" height="10.7" fill="#c4c4c4" stroke="#555" stroke-width="1.3"/><rect x="1.8" y="1.8" width="10.4" height="8.4" fill="none" stroke="#f4f4f4" stroke-width="0.8"/><path d="M0 13.5h14" stroke="#555" stroke-width="1"/></svg></div>
<div class="t" style="left:31px;top:642px;letter-spacing:-0.1px">IDE and Plugin Updates: Android Studio is ready to update. (34 minutes ago)</div>
<div class="t" style="left:1038px;top:642px;letter-spacing:-0.7px">1:1</div>
<div class="t" style="left:1064px;top:642px;letter-spacing:-1.1px">CRLF</div>
<div class="i" style="left:1092px;top:644px"><svg width="6" height="9" viewBox="0 0 6 9"><path d="M0.5 3.5L3 0.5 5.5 3.5zM0.5 5.5L3 8.5 5.5 5.5z" fill="#333"/></svg></div>
<div class="t" style="left:1112px;top:642px;color:#909090">UTF-8</div>
<div class="t" style="left:1155px;top:642px;color:#909090;letter-spacing:-0.1px">Context: &lt;no context&gt;</div>
<div class="i" style="left:1301px;top:644px"><svg width="10" height="10" viewBox="0 0 10 10"><path d="M1.5 4V2.5a2 2 0 0 1 4 0" stroke="#777" stroke-width="1.1" fill="none"/><rect x="3" y="4.5" width="6.5" height="5" fill="#777"/><rect x="5.5" y="6" width="1.5" height="2" fill="#fff"/></svg></div>
<div class="i" style="left:1323px;top:642px"><svg width="13" height="14" viewBox="0 0 13 14"><path d="M2.5 6a4 4.5 0 0 1 8 0v3a4 4 0 0 1-8 0z" fill="#fff" stroke="#777" stroke-width="1.2"/><path d="M1 6h11" stroke="#777" stroke-width="1.4"/><circle cx="4.8" cy="8" r="0.9" fill="#777"/><circle cx="8.2" cy="8" r="0.9" fill="#777"/><path d="M4.5 11h4" stroke="#777" stroke-width="1"/><path d="M3 13.5h7" stroke="#777" stroke-width="1"/></svg></div>
<div class="i" style="left:1346px;top:642px"><svg width="14" height="14" viewBox="0 0 14 14"><circle cx="7" cy="7" r="6.5" fill="#e05454"/><rect x="6" y="2.8" width="2" height="5.5" fill="#fff"/><rect x="6" y="9.5" width="2" height="2" fill="#fff"/></svg></div>
<div class="t" style="left:1073px;top:583px;font-size:18px;line-height:20px;letter-spacing:0.9px;color:rgba(110,110,110,0.5)">Activate Windows</div>
<div class="t" style="left:1073px;top:607px;font-size:14.5px;line-height:18px;letter-spacing:0.2px;color:rgba(110,110,110,0.5)">Go to Settings to activate Windows.</div>
</body></html>
